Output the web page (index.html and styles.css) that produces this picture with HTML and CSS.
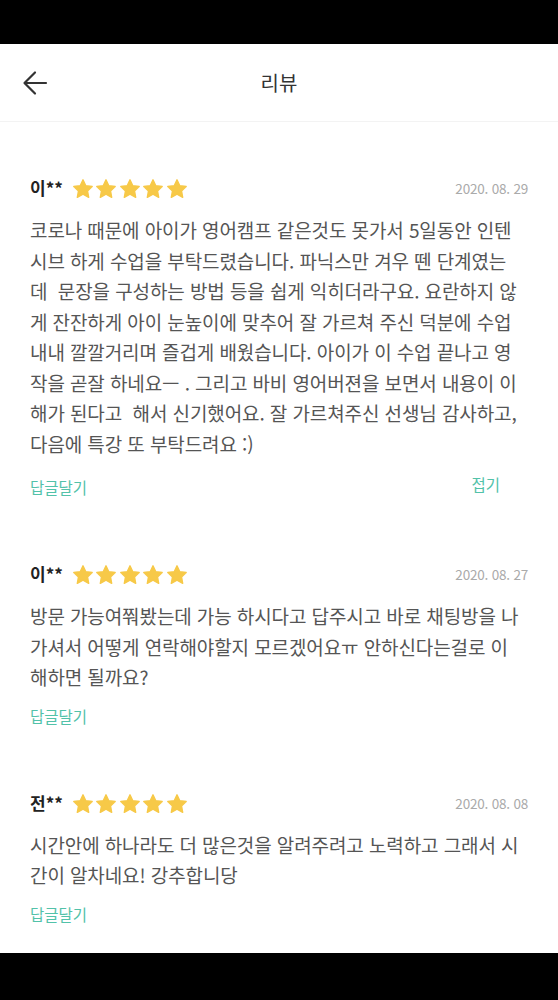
FILE: index.html
```html
<!DOCTYPE html>
<html lang="ko">
<head>
<meta charset="utf-8">
<title>리뷰</title>
<link rel="stylesheet" href="styles.css">
</head>
<body>
<div class="screen">
  <div class="statusbar"></div>
  <header class="appbar">
    <button class="back" aria-label="뒤로">
      <svg width="26" height="26" viewBox="0 0 26 26"><path d="M24 13H3M13 2.5L2.5 13L13 23.5" fill="none" stroke="#333" stroke-width="2.2" stroke-linecap="round" stroke-linejoin="round"/></svg>
    </button>
    <h1 class="title">리뷰</h1>
  </header>
  <main class="list">
    <article class="review">
      <div class="meta">
        <span class="name">이**</span>
        <span class="stars"><svg class="star" viewBox="2 2 20 20"><path d="M12 2.8l2.8 5.9 6.4.8-4.7 4.4 1.2 6.4L12 17.2l-5.7 3.1 1.2-6.4-4.7-4.4 6.4-.8z"/></svg><svg class="star" viewBox="2 2 20 20"><path d="M12 2.8l2.8 5.9 6.4.8-4.7 4.4 1.2 6.4L12 17.2l-5.7 3.1 1.2-6.4-4.7-4.4 6.4-.8z"/></svg><svg class="star" viewBox="2 2 20 20"><path d="M12 2.8l2.8 5.9 6.4.8-4.7 4.4 1.2 6.4L12 17.2l-5.7 3.1 1.2-6.4-4.7-4.4 6.4-.8z"/></svg><svg class="star" viewBox="2 2 20 20"><path d="M12 2.8l2.8 5.9 6.4.8-4.7 4.4 1.2 6.4L12 17.2l-5.7 3.1 1.2-6.4-4.7-4.4 6.4-.8z"/></svg><svg class="star" viewBox="2 2 20 20"><path d="M12 2.8l2.8 5.9 6.4.8-4.7 4.4 1.2 6.4L12 17.2l-5.7 3.1 1.2-6.4-4.7-4.4 6.4-.8z"/></svg></span>
        <span class="date">2020. 08. 29</span>
      </div>
      <p class="body">코로나 때문에 아이가 영어캠프 같은것도 못가서 5일동안 인텐<br>시브 하게 수업을 부탁드렸습니다. 파닉스만 겨우 뗀 단계였는<br>데&nbsp; 문장을 구성하는 방법 등을 쉽게 익히더라구요. 요란하지 않<br>게 잔잔하게 아이 눈높이에 맞추어 잘 가르쳐 주신 덕분에 수업<br>내내 깔깔거리며 즐겁게 배웠습니다. 아이가 이 수업 끝나고 영<br>작을 곧잘 하네요ㅡ . 그리고 바비 영어버젼을 보면서 내용이 이<br>해가 된다고&nbsp; 해서 신기했어요. 잘 가르쳐주신 선생님 감사하고,<br>다음에 특강 또 부탁드려요 :)</p>
      <div class="actions first">
        <a class="reply">답글달기</a>
        <a class="fold">접기</a>
      </div>
    </article>
    <article class="review">
      <div class="meta">
        <span class="name">이**</span>
        <span class="stars"><svg class="star" viewBox="2 2 20 20"><path d="M12 2.8l2.8 5.9 6.4.8-4.7 4.4 1.2 6.4L12 17.2l-5.7 3.1 1.2-6.4-4.7-4.4 6.4-.8z"/></svg><svg class="star" viewBox="2 2 20 20"><path d="M12 2.8l2.8 5.9 6.4.8-4.7 4.4 1.2 6.4L12 17.2l-5.7 3.1 1.2-6.4-4.7-4.4 6.4-.8z"/></svg><svg class="star" viewBox="2 2 20 20"><path d="M12 2.8l2.8 5.9 6.4.8-4.7 4.4 1.2 6.4L12 17.2l-5.7 3.1 1.2-6.4-4.7-4.4 6.4-.8z"/></svg><svg class="star" viewBox="2 2 20 20"><path d="M12 2.8l2.8 5.9 6.4.8-4.7 4.4 1.2 6.4L12 17.2l-5.7 3.1 1.2-6.4-4.7-4.4 6.4-.8z"/></svg><svg class="star" viewBox="2 2 20 20"><path d="M12 2.8l2.8 5.9 6.4.8-4.7 4.4 1.2 6.4L12 17.2l-5.7 3.1 1.2-6.4-4.7-4.4 6.4-.8z"/></svg></span>
        <span class="date">2020. 08. 27</span>
      </div>
      <p class="body">방문 가능여쭤봤는데 가능 하시다고 답주시고 바로 채팅방을 나<br>가셔서 어떻게 연락해야할지 모르겠어요ㅠ 안하신다는걸로 이<br>해하면 될까요?</p>
      <div class="actions">
        <a class="reply">답글달기</a>
      </div>
    </article>
    <article class="review">
      <div class="meta">
        <span class="name">전**</span>
        <span class="stars"><svg class="star" viewBox="2 2 20 20"><path d="M12 2.8l2.8 5.9 6.4.8-4.7 4.4 1.2 6.4L12 17.2l-5.7 3.1 1.2-6.4-4.7-4.4 6.4-.8z"/></svg><svg class="star" viewBox="2 2 20 20"><path d="M12 2.8l2.8 5.9 6.4.8-4.7 4.4 1.2 6.4L12 17.2l-5.7 3.1 1.2-6.4-4.7-4.4 6.4-.8z"/></svg><svg class="star" viewBox="2 2 20 20"><path d="M12 2.8l2.8 5.9 6.4.8-4.7 4.4 1.2 6.4L12 17.2l-5.7 3.1 1.2-6.4-4.7-4.4 6.4-.8z"/></svg><svg class="star" viewBox="2 2 20 20"><path d="M12 2.8l2.8 5.9 6.4.8-4.7 4.4 1.2 6.4L12 17.2l-5.7 3.1 1.2-6.4-4.7-4.4 6.4-.8z"/></svg><svg class="star" viewBox="2 2 20 20"><path d="M12 2.8l2.8 5.9 6.4.8-4.7 4.4 1.2 6.4L12 17.2l-5.7 3.1 1.2-6.4-4.7-4.4 6.4-.8z"/></svg></span>
        <span class="date">2020. 08. 08</span>
      </div>
      <p class="body">시간안에 하나라도 더 많은것을 알려주려고 노력하고 그래서 시<br>간이 알차네요! 강추합니당</p>
      <div class="actions">
        <a class="reply">답글달기</a>
      </div>
    </article>
  </main>
  <div class="navbar"></div>
</div>
</body>
</html>
```

FILE: styles.css
```css
* { box-sizing: border-box; }
html, body {
  margin: 0;
  padding: 0;
  background: #000;
}
body {
  font-family: "Noto Sans CJK KR", "Noto Sans", sans-serif;
  color: #333;
}
.screen {
  width: 558px;
  height: 1000px;
  display: flex;
  flex-direction: column;
  overflow: hidden;
}
.statusbar {
  height: 44px;
  background: #000;
  flex: none;
}
.navbar {
  height: 47px;
  background: #000;
  flex: none;
}
.appbar {
  flex: none;
  height: 78px;
  background: #fff;
  border-bottom: 1px solid #f3f3f3;
  display: flex;
  align-items: center;
  justify-content: center;
  position: relative;
}
.back {
  position: absolute;
  left: 22px;
  top: 26px;
  width: 26px;
  height: 26px;
  padding: 0;
  border: 0;
  background: none;
  display: flex;
}
.title {
  margin: 0;
  font-size: 20px;
  font-weight: 400;
  color: #333;
  line-height: 1;
}
.list {
  flex: 1;
  min-height: 0;
  overflow: hidden;
  background: #fff;
  padding-top: 23px;
}
.review {
  padding: 31px 30px 32px;
}
.meta {
  display: flex;
  align-items: center;
  height: 24px;
}
.name {
  font-size: 17px;
  font-weight: 700;
  color: #222;
  margin-right: 10px;
  line-height: 24px;
}
.stars {
  display: flex;
  gap: 3.5px;
  flex: 1;
  margin-top: 2px;
}
.star {
  width: 20px;
  height: 20px;
  fill: #f7c948;
  stroke: #f7c948;
  stroke-width: 1.4;
  stroke-linejoin: round;
}
.date {
  font-size: 13.5px;
  color: #aaa;
  letter-spacing: -0.2px;
}
.body {
  margin: 15px 0 0;
  font-size: 19px;
  line-height: 30.5px;
  color: #555;
  letter-spacing: -0.1px;
  white-space: nowrap;
}
.actions {
  margin-top: 11px;
  display: flex;
  justify-content: space-between;
  align-items: center;
  height: 24px;
}
.actions.first {
  margin-top: 16px;
}
.reply, .fold {
  font-size: 15.5px;
  color: #52c2a9;
  line-height: 24px;
}
.fold {
  margin-right: 28px;
  margin-top: -6px;
}
```
